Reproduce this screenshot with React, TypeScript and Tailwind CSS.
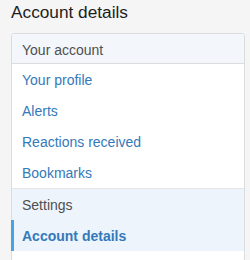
import React from "react";

const items = ["Your profile", "Alerts", "Reactions received", "Bookmarks"];

export default function App() {
  return (
    <div
      className="w-[250px] h-[260px] overflow-hidden bg-[#f5f5f5] text-[14px]"
      style={{ fontFamily: '"Liberation Sans", Arial, sans-serif' }}
    >
      <div className="pl-[11px] pt-[1px] leading-[22px] text-[17.25px] text-[#1d1d1d]">
        Account details
      </div>
      <div className="mt-[10px] ml-[11px] w-[234px] border border-[#dcdcdc] rounded-[3px] bg-white pb-[10px]">
        <div className="h-[30px] pt-[2px] leading-[28px] pl-[10px] text-[#4f4f4f] bg-[#f3f7fc] border-b border-[#dcdcdc] rounded-t-[3px]">
          Your account
        </div>
        <div>
          {items.map((t) => (
            <div key={t} className="h-[31px] pt-[1px] leading-[30px] pl-[10px] text-[#3479ba]">
              {t}
            </div>
          ))}
        </div>
        <div className="border-t border-[#e5e5e5] bg-[#edf4fc]">
          <div className="h-[31px] pt-[1px] leading-[30px] pl-[10px] text-[#4f4f4f]">Settings</div>
          <div className="relative h-[31px] pt-[1px] leading-[30px] pl-[10px] font-bold text-[#3479ba]">
            <span className="absolute left-[-1px] top-0 bottom-0 w-[3px] bg-[#4ba1e6]" />
            Account details
          </div>
        </div>
      </div>
    </div>
  );
}
